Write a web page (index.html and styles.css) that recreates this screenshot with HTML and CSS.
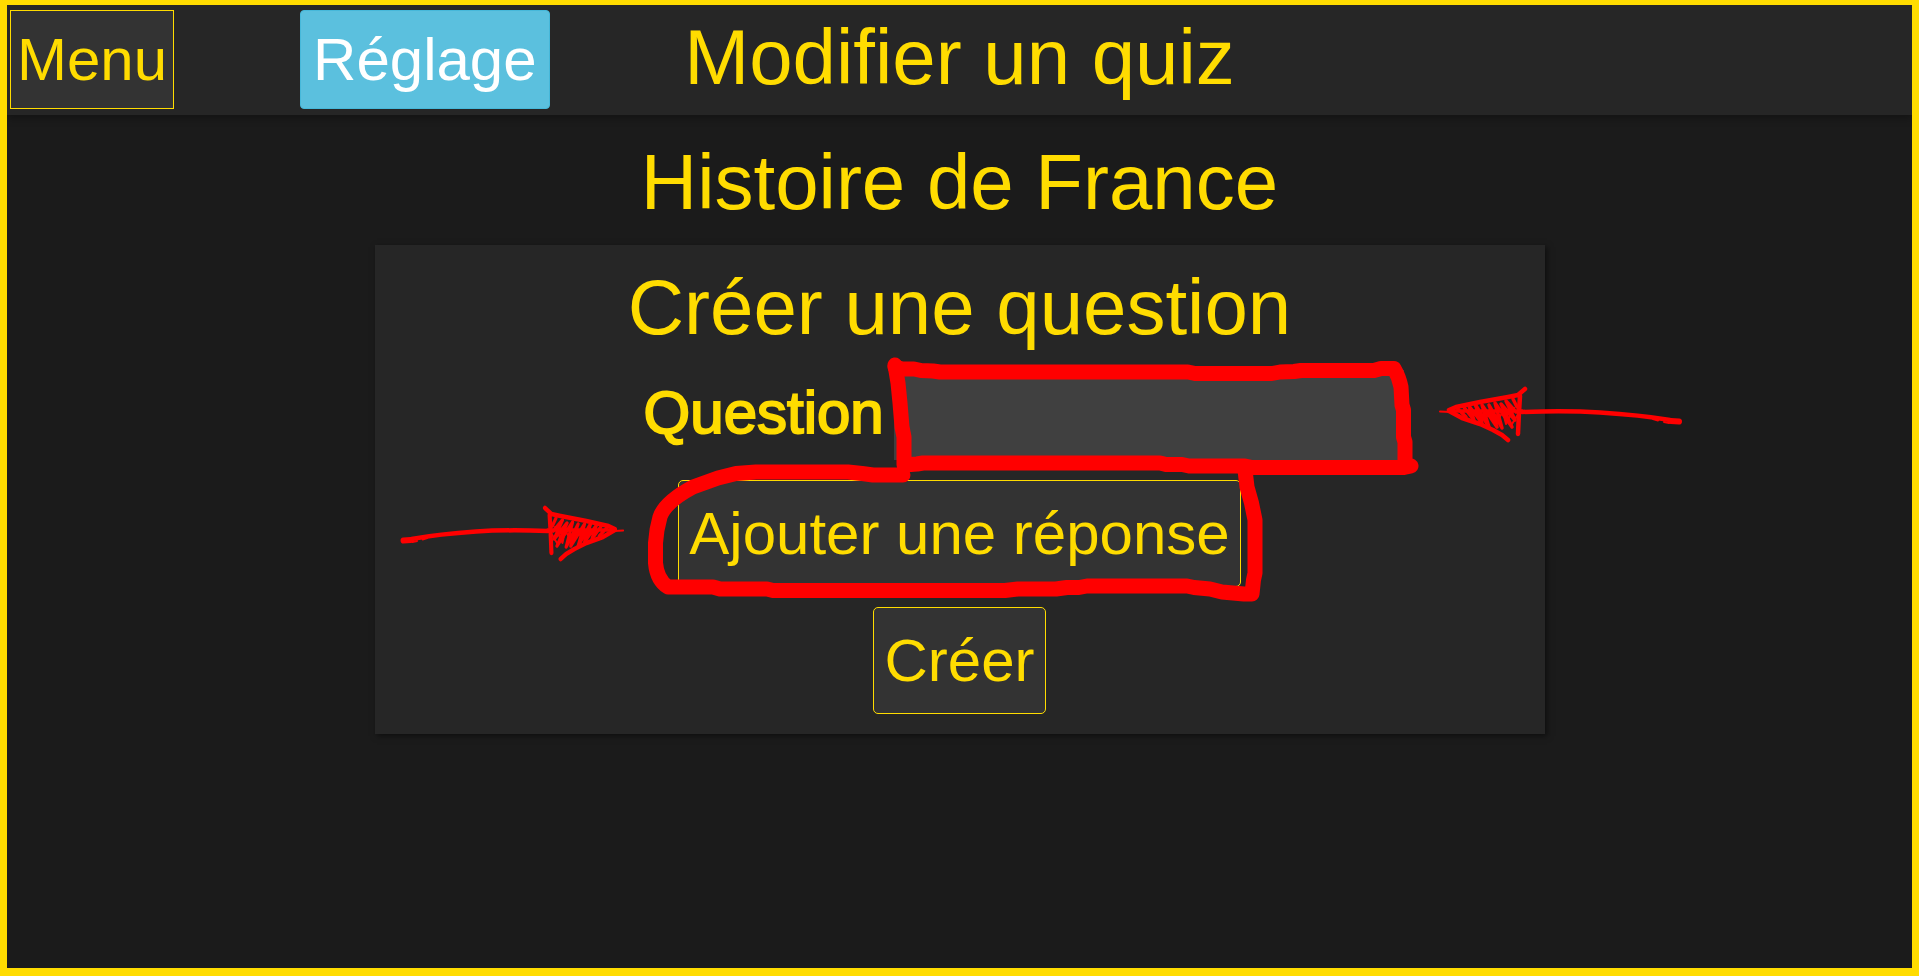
FILE: index.html
```html
<!DOCTYPE html>
<html lang="fr">
<head>
<meta charset="utf-8">
<title>Modifier un quiz</title>
<link rel="stylesheet" href="styles.css">
</head>
<body class="page">
<header class="topbar">
  <nav class="topbar-actions">
    <button class="btn btn-menu" type="button">Menu</button>
    <button class="btn btn-info" type="button">Réglage</button>
  </nav>
  <h1 class="title topbar-title">Modifier un quiz</h1>
</header>
<main class="content">
  <h2 class="title">Histoire de France</h2>
  <form class="card">
    <h2 class="title">Créer une question</h2>
    <div class="field">
      <label class="field-label" for="question">Question</label>
      <input class="field-input" id="question" type="text">
    </div>
    <button class="btn btn-form" type="button">Ajouter une réponse</button>
    <button class="btn btn-form" type="button">Créer</button>
    <svg class="marks" viewBox="375 245 1170 490" aria-hidden="true">
      <defs>
        <g id="arrow">
          <path stroke-width="4.500" d="M1522 412Q1567 410.500 1600 412.500Q1640 415 1670 420"/>
          <path stroke-width="6" d="M1671 421L1679 421.500"/>
          <path stroke-width="2" d="M1440 411.500L1450 412M1653 419L1658 420.500M1664 422L1669 423"/>
          <path stroke-width="4.500" d="M1449 410L1456 407L1480 402L1508 397L1518 395L1525 389M1449 411L1462 418L1480 424L1493 430L1502 435L1508 440M1520 396L1519 412L1518 434"/>
          <path stroke-width="3.500" d="M1450 411H1522M1458 409L1466 417M1463 406L1474 420L1469 406L1482 423L1475 404L1489 427L1482 405L1497 427L1489 405L1502 428L1495 403L1512 427L1501 404L1515 420L1506 401L1516 412M1513 399L1517 407"/>
          <path stroke-width="2" d="M1485 419L1490 412L1496 422L1503 412L1506 424L1514 408M1512 424L1517 416"/>
        </g>
      </defs>
      <g class="marker">
        <path d="M895 365L898 383L900 403L902 427L904 437V465L917 464L923 463H1160L1166 464.500H1182L1189 466H1245L1252 467.500H1404L1411 466"/>
        <path d="M895 367L902 369H914L921 370.500L933 371L940 372H1188L1195 373.500H1272L1280 372L1294 371.500L1301 370.500H1374L1381 368.500H1394Q1399 377 1401 387L1402 405L1403.500 410V437L1405 442V466"/>
        <path d="M903 475H873L862 473.500L848 472H756L736 473.500L718 478L693 487Q665 502 660 517L657 530L655.500 543V563Q657 580 668 587H713L720 589H767L773 590.500H1005L1018 589H1056L1067 587.500H1079L1087 586H1187L1194 587.500L1210 589L1222 592L1244 594H1252L1253.500 580L1255 573V520L1251.500 503L1247 487L1245 470"/>
      </g>
      <use class="marker-thin" href="#arrow"/>
      <use class="marker-thin" href="#arrow" transform="translate(1948 119) scale(-.92 1)"/>
    </svg>
  </form>
</main>
</body>
</html>
```
FILE: styles.css
```css
* {
  box-sizing: border-box;
}

.page {
  margin: 0;
  min-height: 100vh;
  border: solid #ffdc00;
  border-width: 5px 7px 8px;
  background: #1b1b1b;
  color: #ffdc00;
  font-family: "Liberation Sans", Arial, sans-serif;
  font-size: 60px;
  line-height: 85px;
}

.topbar {
  display: grid;
  grid-template-columns: 1fr auto 1fr;
  padding: 5px 3px 6px;
  background: #262626;
  box-shadow: 0 3px 8px rgba(0, 0, 0, 0.3);
}

.topbar-actions {
  display: flex;
  gap: 126px;
}

.title {
  margin: 0;
  font-size: 78px;
  font-weight: 400;
  line-height: 86px;
  text-align: center;
}

.topbar-title {
  padding-top: 4px;
}

.btn {
  border: 1px solid #ffdc00;
  background: #333;
  color: inherit;
  font: inherit;
  white-space: nowrap;
  cursor: pointer;
}

.btn-menu {
  padding: 6px;
}

.btn-info {
  padding: 6px 12px;
  border-color: #46b8da;
  border-radius: 4px;
  background: #5bc0de;
  color: #fff;
}

.btn-form {
  padding: 10px;
  border-radius: 5px;
}

.content {
  display: flex;
  flex-direction: column;
  align-items: center;
  gap: 20px;
  padding: 24px 0;
}

.card {
  position: relative;
  display: flex;
  flex-direction: column;
  align-items: center;
  gap: 20px;
  width: 100%;
  max-width: 1170px;
  padding: 19px 0 20px;
  background: #262626;
  box-shadow: 2px 2px 6px rgba(0, 0, 0, 0.5);
}

.field {
  display: flex;
  align-items: flex-start;
  gap: 10px;
  width: 100%;
  padding: 0 12% 0 23%;
}

.field-label {
  line-height: 86px;
  -webkit-text-stroke: 2px currentColor;
}

.field-input {
  flex: 1;
  min-width: 0;
  height: 90px;
  padding: 0 10px;
  border: 0;
  background: #404040;
  color: inherit;
  font: inherit;
}

.marks {
  position: absolute;
  top: 0;
  left: 0;
  width: 100%;
  overflow: visible;
  pointer-events: none;
}

.marker,
.marker-thin {
  fill: none;
  stroke: #f00;
  stroke-linecap: round;
  stroke-linejoin: round;
}

.marker {
  stroke-width: 15px;
}
```
